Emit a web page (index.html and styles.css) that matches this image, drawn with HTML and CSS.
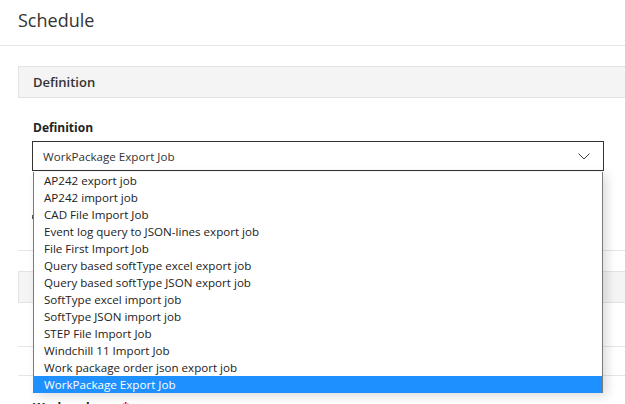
FILE: index.html
```html
<!DOCTYPE html>
<html lang="en">
<head>
  <meta charset="UTF-8">
  <title>Schedule</title>
  <link rel="stylesheet" href="styles.css">
</head>
<body>
  <div class="page-header">Schedule</div>
  <div class="content">
    <!-- Definition section -->
    <div class="section-title">Definition</div>
    <div class="section-body">
      <div class="field">
        <div class="field-label">Definition</div>
        <div class="select-wrap">
          <div class="select-box">
            <span>WorkPackage Export Job</span>
            <svg class="chevron" width="12" height="7" viewBox="0 0 12 7">
              <path d="M0.5 0.5 L6 6 L11.5 0.5" fill="none" stroke="#444" stroke-width="1"/>
            </svg>
          </div>
          <ul class="options" id="options"></ul>
        </div>
      </div>
      <div class="field-extra"><span class="check"></span></div>
    </div>
    <!-- Second section, collapsed -->
    <div class="section-title second"></div>
    <div class="section-body">
      <div class="input-line first"></div>
      <div class="input-line"></div>
      <div class="field-label bottom">Workpackage <span class="req">*</span></div>
    </div>
  </div>
  <script>
    const jobs = [
      "AP242 export job",
      "AP242 import job",
      "CAD File Import Job",
      "Event log query to JSON-lines export job",
      "File First Import Job",
      "Query based softType excel export job",
      "Query based softType JSON export job",
      "SoftType excel import job",
      "SoftType JSON import job",
      "STEP File Import Job",
      "Windchill 11 Import Job",
      "Work package order json export job",
      "WorkPackage Export Job"
    ];
    const selected = "WorkPackage Export Job";
    const list = document.getElementById("options");
    jobs.forEach(name => {
      let li = document.createElement("li");
      li.textContent = name;
      if (name === selected) li.className = "active";
      list.appendChild(li);
    });
  </script>
</body>
</html>
```

FILE: styles.css
```css
body {
  margin: 0;
  font-family: "Open Sans", "Noto Sans", sans-serif;
  color: #333;
  background: #fff;
  overflow: hidden;
}
.page-header {
  height: 46px;
  box-sizing: border-box;
  padding: 8px 18px 0 18px;
  font-size: 18px;
  color: #333;
  border-bottom: 1px solid #e6e6e6;
}
.content {
  padding: 20px 0 0 18px;
  width: 640px;
}
.section-title {
  height: 30px;
  line-height: 30px;
  background: #f4f4f4;
  border: 1px solid #e3e3e3;
  border-right: none;
  padding-left: 14px;
  font-size: 13px;
  font-weight: 600;
  color: #333;
}
.section-title.second {
  margin-top: 20px;
}
.section-body {
  padding: 0 0 0 15px;
}
.field {
  padding-top: 21px;
}
.field-label {
  font-size: 12px;
  font-weight: bold;
  color: #222;
  height: 22px;
}
.field-label.bottom {
  margin-top: 23px;
}
.req {
  color: #e00;
  margin-left: 5px;
}
.select-wrap {
  position: relative;
  width: 572px;
  margin-left: -1px;
}
.select-box {
  height: 30px;
  box-sizing: border-box;
  border: 1px solid #333;
  display: flex;
  align-items: center;
  justify-content: space-between;
  padding: 0 13px 0 10px;
  font-size: 11.6px;
  color: #333;
  background: #fff;
}
.chevron { display: block; }
.options {
  position: absolute;
  left: 1px;
  right: 1px;
  top: 31px;
  margin: 0;
  padding: 0;
  list-style: none;
  background: #fff;
  border-left: 1px solid #7a7a7a;
  border-right: 1px solid #7a7a7a;
  box-shadow: 4px 3px 10px rgba(0,0,0,0.14);
  z-index: 10;
}
.options li {
  height: 17px;
  line-height: 17px;
  padding-left: 10px;
  font-size: 11.6px;
  color: #222;
  white-space: nowrap;
}
.options li.active {
  background: #1e90ff;
  color: #fff;
}
.field-extra {
  height: 35px;
  padding-top: 44px;
  border-bottom: 1px solid #e6e6e6;
  margin-left: -15px;
  padding-left: 14px;
}
.check {
  display: block;
  width: 2px;
  height: 4px;
  background: #555;
}
.input-line {
  height: 28px;
  border-bottom: 1px solid #e6e6e6;
  margin-left: -15px;
}
.input-line.first {
  height: 43px;
}
```
